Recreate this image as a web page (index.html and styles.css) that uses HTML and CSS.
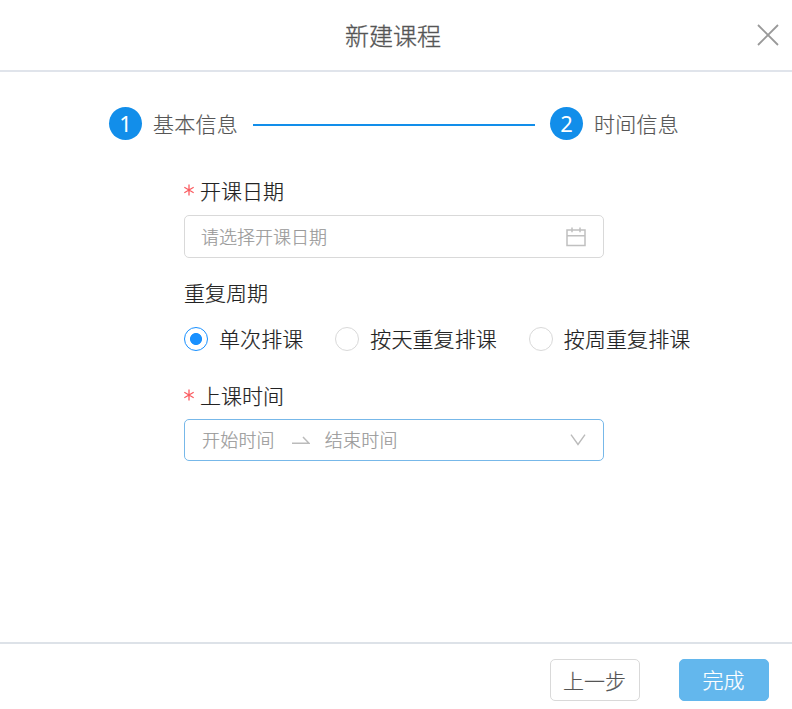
FILE: index.html
```html
<!DOCTYPE html>
<html lang="zh-CN">
<head>
<meta charset="utf-8">
<title>新建课程</title>
<link rel="stylesheet" href="styles.css">
</head>
<body>
<section class="modal">
  <header class="modal-header">
    <h1 class="title">新建课程</h1>
    <svg class="close" width="22" height="22" viewBox="0 0 22 22"><path d="M1 1 21 21M21 1 1 21"/></svg>
  </header>
  <main class="modal-body">
    <div class="steps">
      <span class="step-number">1</span><span class="step-name">基本信息</span>
      <span class="step-line"></span>
      <span class="step-number">2</span><span class="step-name">时间信息</span>
    </div>
    <form class="form">
      <div class="label"><svg class="star" width="10" height="12" viewBox="0 0 10 12"><path d="M5 .5v11M.3 3.2l9.4 5.6M9.7 3.2.3 8.8"/></svg>开课日期</div>
      <div class="field date-field">
        <span>请选择开课日期</span>
        <svg class="calendar" width="20" height="20" viewBox="0 0 20 20"><path d="M1 3h18v15.5H1zM1 8.8h18M6 .5v4.7M14 .5v4.7"/></svg>
      </div>
      <div class="label repeat-label">重复周期</div>
      <div class="radios">
        <span class="radio checked"></span><span class="radio-text">单次排课</span>
        <span class="radio"></span><span class="radio-text">按天重复排课</span>
        <span class="radio"></span><span class="radio-text">按周重复排课</span>
      </div>
      <div class="label time-label"><svg class="star" width="10" height="12" viewBox="0 0 10 12"><path d="M5 .5v11M.3 3.2l9.4 5.6M9.7 3.2.3 8.8"/></svg>上课时间</div>
      <div class="field time-field">
        <span>开始时间</span>
        <svg class="arrow" width="18" height="9" viewBox="0 0 18 9"><path d="M0 7.3h17L11 1"/></svg>
        <span>结束时间</span>
        <svg class="chevron" width="16" height="12" viewBox="0 0 16 12"><path d="M1 .7 8 10.5 15 .7"/></svg>
      </div>
    </form>
  </main>
  <footer class="modal-footer">
    <button class="button">上一步</button>
    <button class="button primary">完成</button>
  </footer>
</section>
</body>
</html>
```
FILE: styles.css
```css
* { box-sizing: border-box; }
body {
  margin: 0;
  background: #fff;
  font-family: "Noto Sans CJK SC", sans-serif;
  font-weight: 300;
  color: #222;
  -webkit-text-stroke: 0.2px currentColor;
}
svg { display: block; flex: none; fill: none; }
.modal { display: flex; flex-direction: column; height: 709px; }
.modal-header {
  display: grid;
  grid-template-columns: 1fr auto 1fr;
  align-items: center;
  height: 72px;
  padding: 1px 13px 1px 7px;
  border-bottom: 2px solid #e0e4eb;
}
.title { grid-column: 2; margin: 0; font-size: 24px; line-height: 36px; font-weight: 300; color: #555; -webkit-text-stroke-width: 0.35px; }
.close { justify-self: end; stroke: #999; stroke-width: 1.8; }
.modal-body { flex: 1; padding-top: 35px; }
.steps { display: flex; align-items: center; height: 33px; padding-left: 109px; }
.step-number {
  width: 33px;
  height: 33px;
  border-radius: 50%;
  background: #128eea;
  color: #fff;
  font: 400 22px/33px "Noto Sans", sans-serif;
  text-align: center;
  -webkit-text-stroke-width: 0;
}
.step-name { width: 85px; margin-left: 11px; padding-bottom: 2px; font-size: 21px; line-height: 32px; letter-spacing: 0.25px; white-space: nowrap; color: #555; }
.step-line { width: 282px; height: 2px; margin: 2px 15px 0; background: #128eea; }
.form { width: 520px; margin: 34px 0 0 184px; }
.label { display: flex; align-items: center; height: 32px; font-size: 21px; line-height: 32px; }
.star { margin: 0 6px 0 0; stroke: #fa5b60; stroke-width: 1.3; }
.field {
  display: flex;
  align-items: center;
  width: 420px;
  border: 1px solid #d9d9d9;
  border-radius: 5px;
  padding: 0 17px 0 16px;
  font-size: 18px;
  color: #999;
}
.field span { padding-bottom: 2px; }
.date-field { height: 43px; margin-top: 9px; }
.calendar { margin-left: auto; stroke: #c0c0c0; stroke-width: 1.5; }
.repeat-label { margin-top: 18px; }
.radios { display: flex; align-items: center; height: 32px; margin-top: 15px; }
.radio { flex: none; width: 24px; height: 24px; border: 1px solid #d9d9d9; border-radius: 50%; }
.checked { border-color: #1890ff; background: radial-gradient(circle, #1890ff 5.6px, transparent 6.4px); }
.radio-text { flex: none; margin: 0 32px 0 11px; padding-bottom: 2px; font-size: 21px; line-height: 32px; letter-spacing: 0.08px; }
.time-label { margin-top: 24px; }
.time-field { height: 42px; margin-top: 8px; padding-left: 17px; border-color: #77b8e9; }
.time-field span { letter-spacing: 0.2px; }
.arrow { margin: 0 15px 0 17px; stroke: #bbb; stroke-width: 1.5; }
.chevron { margin-left: auto; stroke: #bbb; stroke-width: 1.4; }
.modal-footer {
  display: flex;
  justify-content: flex-end;
  gap: 39px;
  height: 67px;
  padding: 15px 23px 0 0;
  border-top: 2px solid #dde2e8;
}
.button {
  width: 90px;
  height: 42px;
  padding: 0 1px 0 0;
  border: 1px solid #d9d9d9;
  border-radius: 5px;
  background: #fff;
  font: inherit;
  font-size: 21px;
  line-height: 40px;
  color: #555;
}
.primary { padding-bottom: 2px; line-height: 38px; border-color: #63b7ed; background: #63b7ed; color: #fff; }
```
